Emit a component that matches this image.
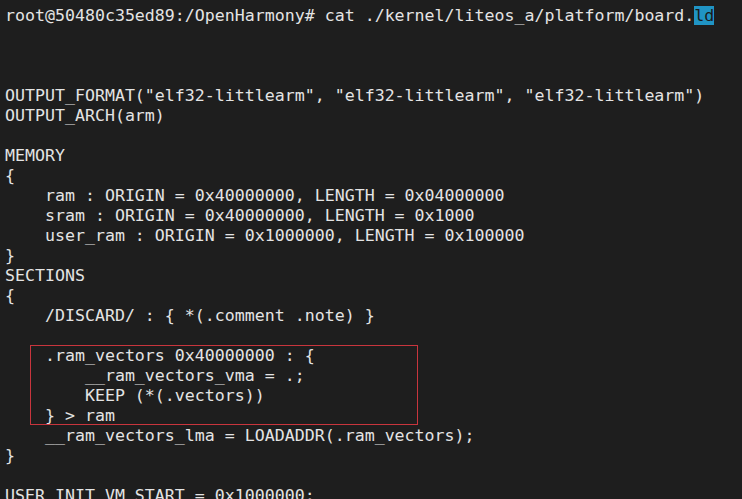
import React from 'react'

const lines: string[] = [
  '',
  '',
  '',
  'OUTPUT_FORMAT("elf32-littlearm", "elf32-littlearm", "elf32-littlearm")',
  'OUTPUT_ARCH(arm)',
  '',
  'MEMORY',
  '{',
  '    ram : ORIGIN = 0x40000000, LENGTH = 0x04000000',
  '    sram : ORIGIN = 0x40000000, LENGTH = 0x1000',
  '    user_ram : ORIGIN = 0x1000000, LENGTH = 0x100000',
  '}',
  'SECTIONS',
  '{',
  '    /DISCARD/ : { *(.comment .note) }',
  '',
  '    .ram_vectors 0x40000000 : {',
  '        __ram_vectors_vma = .;',
  '        KEEP (*(.vectors))',
  '    } > ram',
  '    __ram_vectors_lma = LOADADDR(.ram_vectors);',
  '}',
  '',
  'USER_INIT_VM_START = 0x1000000;',
]

export default function App() {
  return (
    <div className="relative h-[499px] w-[742px] overflow-hidden bg-[#1e1e1e] text-[#e4e4e4]">
      <div className="whitespace-pre pl-[5px] pt-[6px] font-['DejaVu_Sans_Mono',monospace] text-[16.6px] leading-[20px]">
        <div>
          root@50480c35ed89:/OpenHarmony# cat ./kernel/liteos_a/platform/board.
          <span className="bg-[#2094c4] text-[#1a1a1a]">ld</span>
        </div>
        {lines.map((line, i) => (
          <div key={i} className="h-[20px]">
            {line}
          </div>
        ))}
      </div>
      {/* highlight frame around the vectors block */}
      <div className="absolute left-[30px] top-[345px] h-[80px] w-[388px] border border-[#c8353d]" />
    </div>
  )
}
